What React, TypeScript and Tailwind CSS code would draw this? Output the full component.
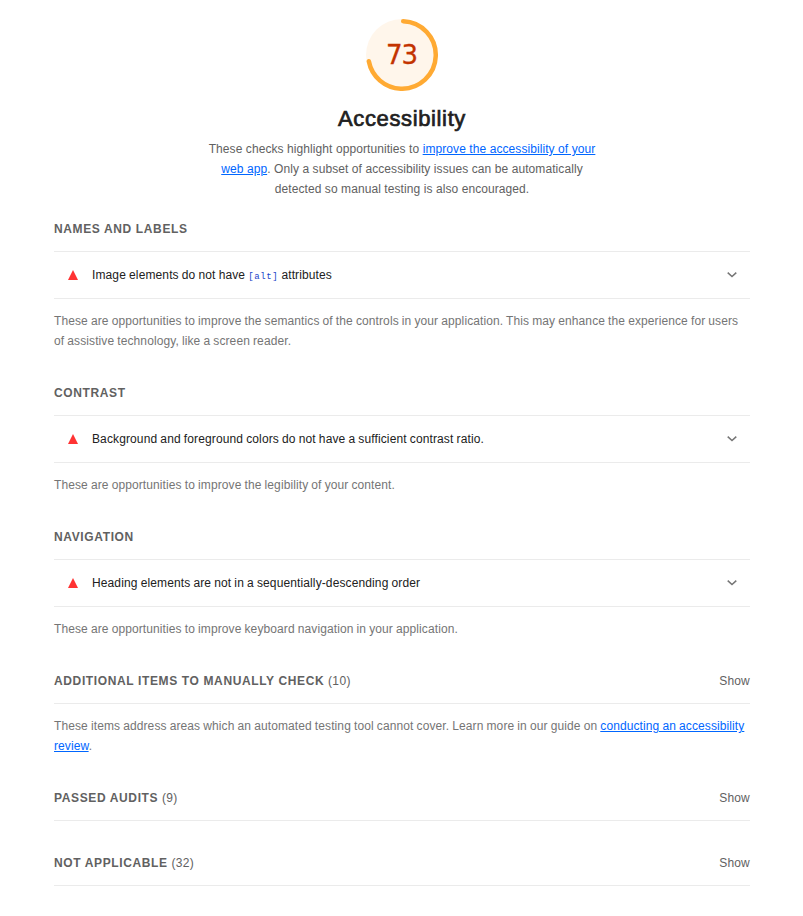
import type { ReactNode } from "react";

function Gauge({ score }: { score: number }) {
  const r = 33.75;
  const length = 2 * Math.PI * r;
  const arc = (score / 100) * length - 3.5;
  return (
    <svg width="72" height="72" viewBox="0 0 72 72">
      <circle cx="36" cy="36" r="36" fill="#fff6eb" />
      <circle
        cx="36"
        cy="36"
        r={r}
        fill="none"
        stroke="#ffaa33"
        strokeWidth="4.5"
        strokeLinecap="round"
        strokeDasharray={`${arc} ${length}`}
        transform="rotate(-88 36 36)"
      />
      <text
        x="35.5"
        y="45"
        textAnchor="middle"
        fill="#c33300"
        stroke="#c33300"
        strokeWidth="0.3"
        className="font-['DejaVu_Sans',sans-serif] text-[26px] tracking-[-1px]"
      >
        {score}
      </text>
    </svg>
  );
}

function Link({ children }: { children: ReactNode }) {
  return (
    <a href="#" className="text-[#0066ff] underline">
      {children}
    </a>
  );
}

function GroupTitle({ title, count }: { title: string; count?: number }) {
  return (
    <div className="flex items-center justify-between border-b border-[#ebebeb] pb-3 text-[#616161]">
      <h2 className="text-xs leading-5 tracking-[0.63px]">
        <span className="font-bold uppercase">{title}</span>
        {count !== undefined && <span className="tracking-[0.35px]"> ({count})</span>}
      </h2>
      {count !== undefined && <span className="text-xs leading-5 tracking-[0.2px]">Show</span>}
    </div>
  );
}

function Audit({ children }: { children: ReactNode }) {
  return (
    <div className="flex h-[47px] items-center border-b border-[#ebebeb] pr-3 pl-3.5 text-[#212121]">
      <svg width="10" height="10" viewBox="0 0 10 10" className="mr-3.5">
        <path d="M5 0L10 10H0Z" fill="#ff3333" />
      </svg>
      <span className="grow leading-5 tracking-[0.12px] [word-spacing:-0.35px]">{children}</span>
      <svg width="12" height="12" viewBox="0 0 12 12" fill="none" stroke="#757575" strokeWidth="1.5">
        <path d="M1.7 3.6L6 7.5L10.3 3.6" />
      </svg>
    </div>
  );
}

function Description({ children }: { children: ReactNode }) {
  return <p className="pt-3 leading-5 tracking-[0.1px] text-[#757575] [word-spacing:-0.35px]">{children}</p>;
}

export default function App() {
  return (
    <main className="h-[916px] bg-white pt-[19px] pr-[53px] pl-[54px] font-['Liberation_Sans',Arial,sans-serif] text-xs">
      <header className="flex flex-col items-center">
        <Gauge score={73} />
        <h1 className="mt-3.5 text-[22px] leading-7 font-normal tracking-[0.63px] text-[#212121] [-webkit-text-stroke:0.7px_#212121]">
          Accessibility
        </h1>
        <p className="mt-1.5 w-[400px] text-center leading-5 tracking-[0.08px] text-[#616161]">
          These checks highlight opportunities to <Link>improve the accessibility of your</Link>
          <br />
          <Link>web app</Link>. Only a subset of accessibility issues can be automatically
          <br />
          detected so manual testing is also encouraged.
        </p>
      </header>
      <div className="mt-5 flex flex-col gap-8">
        <section>
          <GroupTitle title="Names and labels" />
          <Audit>
            Image elements do not have{" "}
            <code className="font-['Liberation_Mono',monospace] text-[9px] leading-none tracking-[0.6px] text-[#1a45c9]">[alt]</code>{" "}
            attributes
          </Audit>
          <Description>
            These are opportunities to improve the semantics of the controls in your application. This may enhance the
            experience for users
            <br />
            of assistive technology, like a screen reader.
          </Description>
        </section>
        <section>
          <GroupTitle title="Contrast" />
          <Audit>Background and foreground colors do not have a sufficient contrast ratio.</Audit>
          <Description>These are opportunities to improve the legibility of your content.</Description>
        </section>
        <section>
          <GroupTitle title="Navigation" />
          <Audit>Heading elements are not in a sequentially-descending order</Audit>
          <Description>These are opportunities to improve keyboard navigation in your application.</Description>
        </section>
        <section>
          <GroupTitle title="Additional items to manually check" count={10} />
          <Description>
            These items address areas which an automated testing tool cannot cover. Learn more in our guide on{" "}
            <Link>conducting an accessibility</Link>
            <br />
            <Link>review</Link>.
          </Description>
        </section>
        <section>
          <GroupTitle title="Passed audits" count={9} />
        </section>
        <section>
          <GroupTitle title="Not applicable" count={32} />
        </section>
      </div>
    </main>
  );
}
